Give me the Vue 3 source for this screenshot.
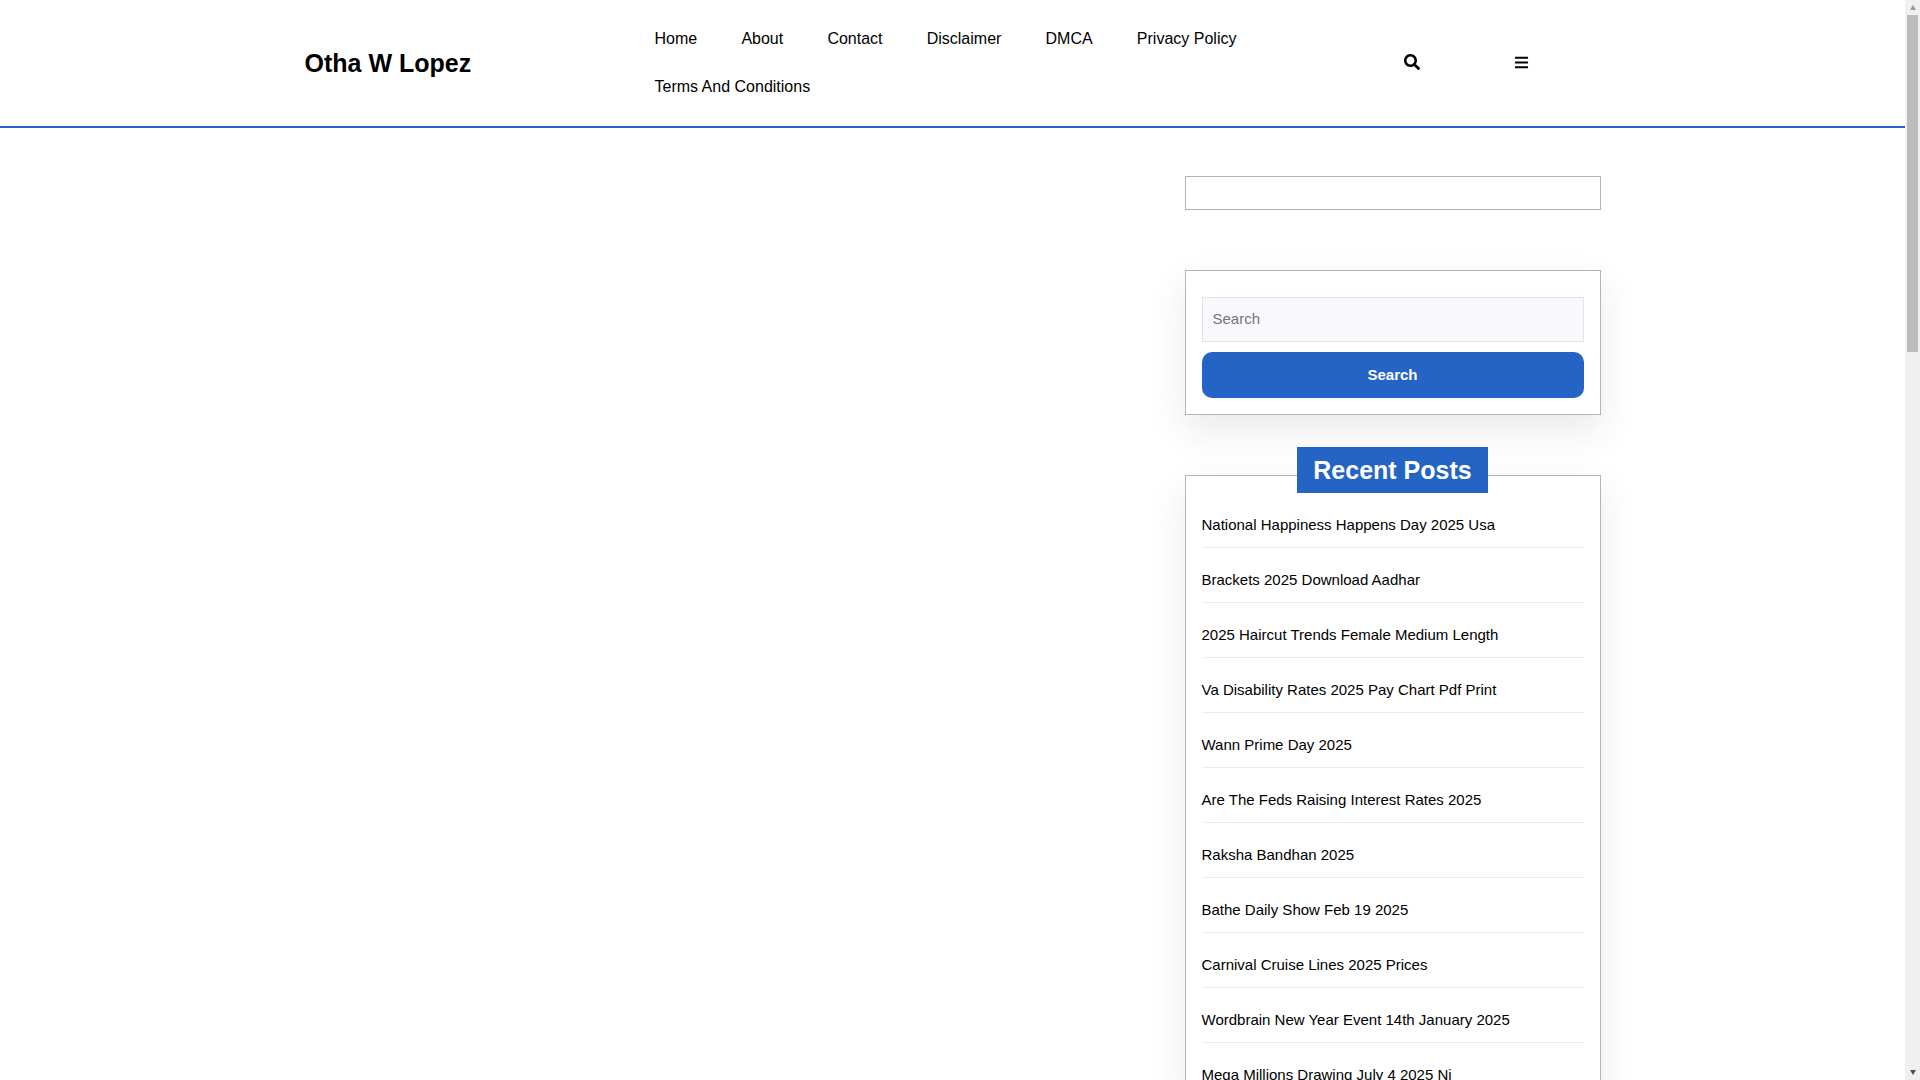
<template>
  <div class="window">
    <div class="page">
      <header class="site-header">
        <div class="header-inner">
          <a class="logo">Otha W Lopez</a>
          <nav class="menu">
            <a v-for="item in menuItems" :key="item">{{ item }}</a>
          </nav>
          <div class="header-icons">
            <svg class="icon icon-search" viewBox="0 0 512 512">
              <path d="M505 442.700L405.300 343c-4.500-4.500-10.600-7-17-7H372c27.600-35.300 44-79.700 44-128C416 93.100 322.900 0 208 0S0 93.100 0 208s93.100 208 208 208c48.300 0 92.700-16.400 128-44v16.300c0 6.400 2.500 12.500 7 17l99.700 99.700c9.400 9.400 24.600 9.400 33.900 0l28.300-28.300c9.400-9.400 9.400-24.600.1-34zM208 336c-70.700 0-128-57.200-128-128 0-70.700 57.200-128 128-128 70.700 0 128 57.200 128 128 0 70.700-57.200 128-128 128z" />
            </svg>
            <svg class="icon" viewBox="0 0 448 512">
              <path d="M16 132h416c8.800 0 16-7.200 16-16V76c0-8.800-7.200-16-16-16H16C7.200 60 0 67.200 0 76v40c0 8.800 7.200 16 16 16zm0 160h416c8.800 0 16-7.200 16-16v-40c0-8.800-7.200-16-16-16H16c-8.800 0-16 7.200-16 16v40c0 8.800 7.200 16 16 16zm0 160h416c8.800 0 16-7.200 16-16v-40c0-8.800-7.200-16-16-16H16c-8.800 0-16 7.200-16 16v40c0 8.800 7.200 16 16 16z" />
            </svg>
          </div>
        </div>
      </header>

      <div class="content">
        <main class="main-col"></main>
        <aside class="sidebar">
          <div class="box empty-box"></div>
          <div class="box shadow search-box">
            <input class="search-input" type="text" placeholder="Search" />
            <button class="search-btn">Search</button>
          </div>
          <div class="box shadow posts-box">
            <h2 class="box-title">Recent Posts</h2>
            <ul class="posts">
              <li v-for="post in recentPosts" :key="post"><a>{{ post }}</a></li>
            </ul>
          </div>
        </aside>
      </div>
    </div>

    <!-- fake scrollbar, the page itself is clipped to the window -->
    <div class="scrollbar">
      <span class="arrow up"></span>
      <div class="track"><div class="thumb"></div></div>
      <span class="arrow down"></span>
    </div>
  </div>
</template>

<script setup>
const menuItems = ['Home', 'About', 'Contact', 'Disclaimer', 'DMCA', 'Privacy Policy', 'Terms And Conditions']

const recentPosts = [
  'National Happiness Happens Day 2025 Usa',
  'Brackets 2025 Download Aadhar',
  '2025 Haircut Trends Female Medium Length',
  'Va Disability Rates 2025 Pay Chart Pdf Print',
  'Wann Prime Day 2025',
  'Are The Feds Raising Interest Rates 2025',
  'Raksha Bandhan 2025',
  'Bathe Daily Show Feb 19 2025',
  'Carnival Cruise Lines 2025 Prices',
  'Wordbrain New Year Event 14th January 2025',
  'Mega Millions Drawing July 4 2025 Nj'
]
</script>

<style>
html, body {
  margin: 0;
  background: #fff;
  overflow: hidden;
}
</style>

<style scoped>
.window {
  display: flex;
  height: 100vh;
  overflow: hidden;
  font-family: "Liberation Sans", Arial, sans-serif;
  color: #000;
}
.page {
  flex: 1;
  min-width: 0;
  overflow: hidden;
}
.site-header {
  border-bottom: 2px solid #2364c4;
}
.header-inner {
  width: 1296px;
  margin: 0 auto;
  height: 126px;
  display: flex;
  align-items: center;
}
.logo {
  width: 350px;
  font-size: 25px;
  font-weight: 700;
}
.menu {
  width: 640px;
  display: flex;
  flex-wrap: wrap;
  font-size: 16px;
}
.menu a {
  padding: 0 22.1px 0 0;
  margin-right: 22.1px;
  height: 48px;
  line-height: 48px;
}
.header-icons {
  display: flex;
  align-items: center;
  gap: 94px;
  margin-left: 109px;
  margin-bottom: 2px;
}
.icon {
  width: 15px;
  height: 15px;
  fill: #000;
}
.icon-search {
  width: 16px;
  height: 16px;
}
.content {
  width: 1296px;
  margin: 0 auto;
  padding-top: 48px;
  display: flex;
  justify-content: space-between;
}
.main-col {
  flex: 1;
}
.sidebar {
  width: 416px;
}
.box {
  border: 1px solid #b5b5b5;
  box-sizing: border-box;
  background: #fff;
}
.shadow {
  box-shadow: 0 15px 35px rgba(60, 40, 30, 0.1);
}
.empty-box {
  height: 34px;
  margin-bottom: 60px;
}
.search-box {
  padding: 26px 16px 16px;
  margin-bottom: 60px;
  display: flex;
  flex-direction: column;
  gap: 10px;
}
.search-input {
  height: 45px;
  box-sizing: border-box;
  border: 1px solid #e2e2ea;
  background: #f8f8fd;
  padding: 0 10px 2px;
  font: 15px "Liberation Sans", Arial, sans-serif;
  outline: none;
}
.search-input::placeholder {
  color: #757575;
}
.search-btn {
  height: 46px;
  border: none;
  border-radius: 10px;
  padding: 0 0 2px;
  background: #2364c4;
  color: #fff;
  font: 700 15px "Liberation Sans", Arial, sans-serif;
}
.posts-box {
  padding: 0 16px;
}
.box-title {
  width: fit-content;
  margin: -29px auto 0;
  padding: 0 16.500px;
  height: 46px;
  line-height: 46px;
  background: #2364c4;
  color: #fff;
  font-size: 25px;
  font-weight: 700;
}
.posts {
  list-style: none;
  margin: 0;
  padding: 0;
}
.posts li {
  height: 55px;
  box-sizing: border-box;
  border-bottom: 1px solid #eeeeee;
  padding-top: 20px;
  line-height: 24px;
  font-size: 15px;
}
.scrollbar {
  width: 15px;
  flex: none;
  display: flex;
  flex-direction: column;
  background: #f0f0f0;
}
.arrow {
  height: 15px;
  flex: none;
  display: flex;
  align-items: center;
  justify-content: center;
}
.arrow::before {
  content: "";
  border-left: 3.500px solid transparent;
  border-right: 3.500px solid transparent;
}
.arrow.up::before {
  border-bottom: 5px solid #9a9a9a;
}
.arrow.down::before {
  border-top: 5px solid #505050;
}
.track {
  flex: 1;
}
.thumb {
  height: 337px;
  margin: 0 2px;
  background: #bcbcbc;
}
</style>
